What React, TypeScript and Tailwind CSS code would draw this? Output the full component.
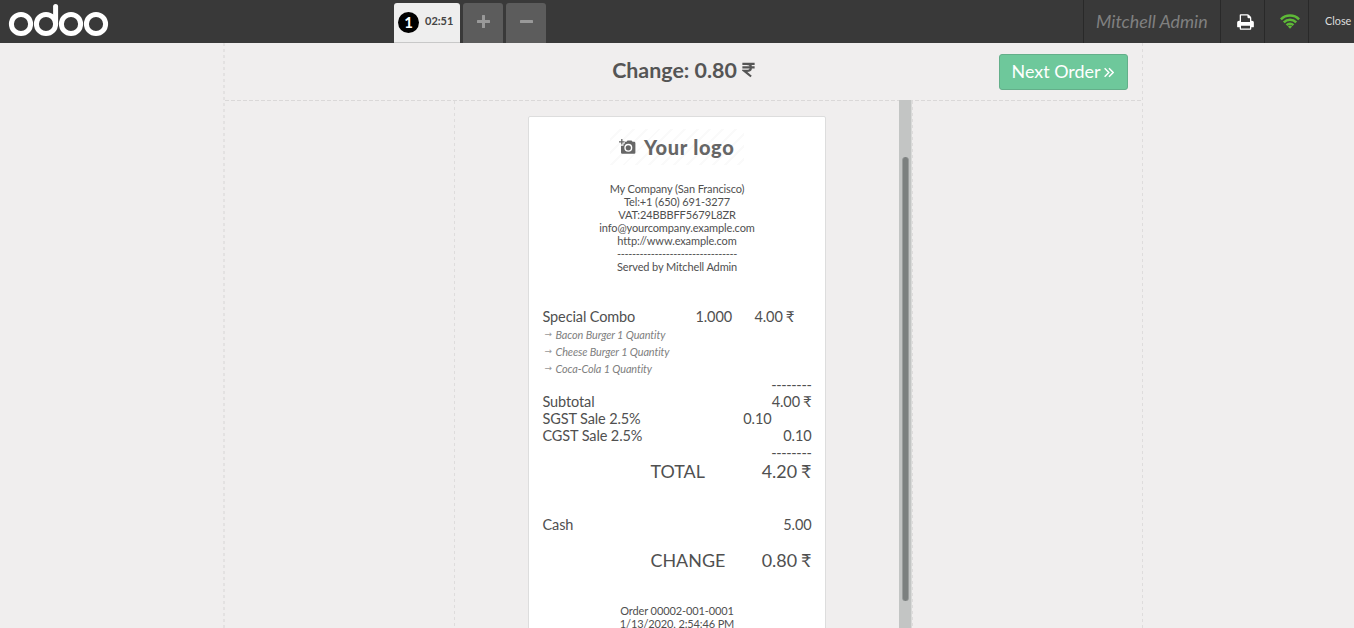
import type { ReactNode } from 'react';

const FONT = "font-['Lato','Noto_Sans','DejaVu_Sans',sans-serif]";
const DASH_V = 'bg-[repeating-linear-gradient(180deg,#dedcdc_0px,#dedcdc_3px,transparent_3px,transparent_6px)]';
const DASH_H = 'bg-[repeating-linear-gradient(90deg,#dad8d8_0px,#dad8d8_4px,transparent_4px,transparent_6px)]';

function OdooLogo() {
  return (
    <svg className="ml-2 block" width="102" height="40" viewBox="0 0 102 40" fill="none" stroke="#fff" strokeWidth="5">
      <circle cx="13" cy="24" r="9.6" />
      <circle cx="38" cy="24" r="9.6" />
      <circle cx="63" cy="24" r="9.6" />
      <circle cx="88" cy="24" r="9.6" />
      <path d="M47.6 24V6.500" strokeLinecap="round" />
    </svg>
  );
}

function PrintIcon() {
  return (
    <svg width="17" height="18" viewBox="0 0 1664 1792" fill="#fff">
      <path d="M384 1536h896v-256h-896v256zM384 896h896v-384h-160q-40 0-68-28t-28-68v-160h-640v640zM1536 960q0 26-19 45t-45 19-45-19-19-45 19-45 45-19 45 19 19 45zM1664 960v416q0 13-9.500 22.500t-22.500 9.500h-224v160q0 40-28 68t-68 28h-960q-40 0-68-28t-28-68v-160h-224q-13 0-22.500-9.500t-9.500-22.500v-416q0-79 56.500-135.500t135.500-56.500h64v-544q0-40 28-68t68-28h672q40 0 88 20t76 48l152 152q28 28 48 76t20 88v256h64q79 0 135.500 56.500t56.500 135.500z" />
    </svg>
  );
}

function WifiIcon() {
  return (
    <svg width="20" height="15" viewBox="0 0 20 15" fill="none" stroke="#5eb937" strokeWidth="2.500">
      <path d="M.9 5.300a12.900 12.900 0 0 1 18.200 0" />
      <path d="M3.800 8.300a8.800 8.800 0 0 1 12.400 0" />
      <path d="M6.600 11.100a4.800 4.800 0 0 1 6.800 0" />
      <path d="M7.900 12.500a2.900 2.900 0 0 1 4.200 0L10 14.700z" fill="#5eb937" stroke="none" />
    </svg>
  );
}

function CameraIcon() {
  return (
    <svg width="17" height="16" viewBox="0 0 17 16">
      <path d="M6 2.800h1.500l1-1.300h4l1.100 1.300H15a1.400 1.400 0 0 1 1.400 1.400v9.200a1.300 1.300 0 0 1-1.400 1.300H3.300A1.300 1.300 0 0 1 2 13.400V6.800h2.500V4.600H6z" fill="#666" />
      <circle cx="9.300" cy="8.800" r="3.300" fill="none" stroke="#fff" strokeWidth="1.400" />
      <path d="M2.800 0v5.600M0 2.800h5.600" stroke="#666" strokeWidth="1.300" />
    </svg>
  );
}

function RupeeIcon() {
  return (
    <svg className="h-4 w-[13px]" viewBox="0 0 14 16" fill="none" stroke="currentColor" strokeWidth="2.300">
      <path d="M.4 1.400h13.200M.4 5.200h13.200M1.500 1.400H5c6.200 0 6.200 7.600 0 7.600H2.500l7.300 6" />
    </svg>
  );
}

function Amount({ value, large }: { value: string; large?: boolean }) {
  return (
    <span className={large ? 'flex items-center gap-1' : 'flex items-center gap-[3px]'}>
      {value} <span className={large ? 'text-[18px]' : 'text-[15px]'}>₹</span>
    </span>
  );
}

function Row({ label, children, className = '' }: { label?: string; children: ReactNode; className?: string }) {
  return (
    <div className={`flex h-[17px] items-center justify-between ${className}`}>
      <span>{label}</span>
      {children}
    </div>
  );
}

function TotalRow({ label, value }: { label: string; value: string }) {
  return (
    <div className="flex h-5 items-center justify-between pl-[108px] text-[17.900px] tracking-normal">
      <span>{label}</span>
      <Amount value={value} large />
    </div>
  );
}

function ComboItem({ name }: { name: string }) {
  return (
    <div className="flex h-[17px] items-center gap-[2px]">
      <span className="w-[9px] font-['DejaVu_Sans',sans-serif] text-[9px] text-[#999] not-italic">→</span>
      {name} 1 Quantity
    </div>
  );
}

function Header() {
  return (
    <header className="flex h-[43px] shrink-0 bg-[#393939]">
      <div className="w-[394px]">
        <OdooLogo />
      </div>
      <div className="flex flex-1 gap-[3px] pt-[3px]">
        <div className="flex w-[66px] items-center rounded-t-[3px] border-b border-[#c8c8c8] bg-[#eee] pl-1 pb-px">
          <span className="flex size-[21px] items-center justify-center rounded-full bg-black text-[15px] font-bold text-white">1</span>
          <span className="ml-[6px] pb-[2px] text-[11px] font-bold text-[#444]">02:51</span>
        </div>
        <div className="flex w-10 items-center justify-center rounded-t-[3px] bg-[#5c5c5c] pb-[3px]">
          <svg width="13" height="13" viewBox="0 0 13 13" fill="#999">
            <path d="M5 .6a.6.6 0 0 1 .6-.6h1.800a.6.6 0 0 1 .6.6V5h4.400a.6.6 0 0 1 .6.6v1.800a.6.6 0 0 1-.6.6H8v4.400a.6.6 0 0 1-.6.6H5.600a.6.6 0 0 1-.6-.6V8H.6a.6.6 0 0 1-.6-.6V5.600A.6.6 0 0 1 .6 5H5z" />
          </svg>
        </div>
        <div className="flex w-10 items-center justify-center rounded-t-[3px] bg-[#5c5c5c] pb-[3px]">
          <svg width="13" height="13" viewBox="0 0 13 13" fill="#999">
            <rect y="5" width="13" height="3" rx=".6" />
          </svg>
        </div>
      </div>
      <div className="flex w-[137px] items-center border-l border-[#292929] pl-3 text-[17.900px] text-[#808080] italic">Mitchell Admin</div>
      <div className="flex w-11 items-center justify-center border-l border-[#292929] pl-[5px]">
        <PrintIcon />
      </div>
      <div className="flex w-11 items-center justify-center border-l border-[#292929] pl-[6px] pb-px">
        <WifiIcon />
      </div>
      <div className="flex w-[46px] items-center border-l border-[#292929] pb-px pl-4 text-[10.800px] text-[#ddd]">Close</div>
    </header>
  );
}

function Receipt() {
  return (
    <div className="h-[600px] w-[298px] shrink-0 rounded-[2px] border border-[#ddd] bg-white pt-3 pr-[13.500px] pl-[13.500px] text-[14.500px] leading-[17px] tracking-[-0.120px] text-[#505050]">
      <div className="mx-auto flex h-[36px] w-[134px] items-center gap-2 bg-[repeating-linear-gradient(135deg,#fff_0px,#fff_7px,#fafafa_7px,#fafafa_9px)] pl-[9px]">
        <CameraIcon />
        <span className="text-[20px] font-black tracking-[0.700px] text-[#666]">Your logo</span>
      </div>
      <div className="mt-[17px] text-center text-[11px] leading-[13px]">
        <div>My Company (San Francisco)</div>
        <div>Tel:+1 (650) 691-3277</div>
        <div>VAT:24BBBFF5679L8ZR</div>
        <div>info@yourcompany.example.com</div>
        <div>http://www.example.com</div>
        <div className="tracking-[-0.340px]">--------------------------------</div>
        <div>Served by Mitchell Admin</div>
      </div>
      <div className="mt-[35px] flex h-[17px] items-center">
        <span className="w-[153px]">Special Combo</span>
        <span className="w-[59px]">1.000</span>
        <Amount value="4.00" />
      </div>
      <div className="h-[51px] pt-px pl-[2px] text-[10.900px] text-[#808080] italic">
        <ComboItem name="Bacon Burger" />
        <ComboItem name="Cheese Burger" />
        <ComboItem name="Coca-Cola" />
      </div>
      <Row><span className="tracking-[-0.340px]">--------</span></Row>
      <Row label="Subtotal"><Amount value="4.00" /></Row>
      <Row label="SGST Sale 2.5%" className="pr-10">0.10</Row>
      <Row label="CGST Sale 2.5%">0.10</Row>
      <Row><span className="tracking-[-0.340px]">--------</span></Row>
      <TotalRow label="TOTAL" value="4.20" />
      <Row label="Cash" className="mt-[35px] mb-[17px]">5.00</Row>
      <TotalRow label="CHANGE" value="0.80" />
      <div className="mt-[34px] text-center text-[11px] leading-[13px]">
        <div>Order 00002-001-0001</div>
        <div>1/13/2020, 2:54:46 PM</div>
      </div>
    </div>
  );
}

export default function App() {
  return (
    <div className={`flex h-[628px] w-[1354px] flex-col overflow-hidden bg-[#f0eeee] whitespace-nowrap ${FONT}`}>
      <Header />
      <main className="ml-[223px] flex w-[920px] flex-1">
        <div className={`w-[2px] shrink-0 opacity-70 ${DASH_V}`} />
        <div className="flex w-[917px] flex-col">
          <div className="grid h-[57px] shrink-0 grid-cols-[1fr_auto_1fr] items-center">
            <span />
            <h1 className="flex items-center gap-[5px] pb-[2px] text-[21.400px] font-bold text-[#555]">
              Change: 0.80 <RupeeIcon />
            </h1>
            <button className="mt-px mr-[14px] flex h-9 w-[129px] items-center justify-center gap-1 justify-self-end rounded-[3px] border border-[#64af8a] bg-[#6ec89b] pr-px pb-[2px] text-[17.900px] text-white">
              Next Order
              <svg className="mt-[2px]" width="10" height="11" viewBox="0 0 11 11" fill="none" stroke="#fff" strokeWidth="1.600">
                <path d="M.7 .9 5.300 5.500.7 10.100M5.500 .9l4.600 4.600-4.600 4.600" />
              </svg>
            </button>
          </div>
          <div className={`h-px shrink-0 ${DASH_H}`} />
          <div className="flex min-h-0 flex-1">
            <div className="w-[229px]" />
            <div className={`w-px ${DASH_V}`} />
            <div className="flex w-[444px] justify-center overflow-hidden pt-[15px]">
              <Receipt />
            </div>
            <div className="-mt-px w-[13px] border-r border-[#d9dad9] bg-[#c3c5c4] pt-[57px] pl-[3px]">
              <div className="h-[444px] w-[7px] rounded-full border-x border-[#9a9d9c] bg-[#7c807f]" />
            </div>
            <div className={`w-px ${DASH_V}`} />
          </div>
        </div>
        <div className={`w-px ${DASH_V}`} />
      </main>
    </div>
  );
}
